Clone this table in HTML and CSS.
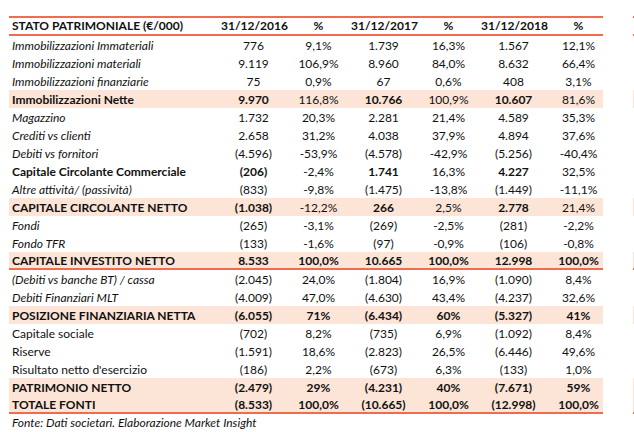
FILE: index.html
```html
<!DOCTYPE html>
<html lang="it">
<head>
<meta charset="utf-8">
<title>Stato Patrimoniale</title>
<link rel="stylesheet" href="styles.css">
</head>
<body>
<div class="page">
  <div class="sheet">
    <div class="row head">
      <div class="lbl">STATO PATRIMONIALE (€/000)</div>
      <div>31/12/2016</div><div>%</div><div>31/12/2017</div><div>%</div><div>31/12/2018</div><div class="last">%</div>
    </div>
    <div class="row it">
      <div class="lbl">Immobilizzazioni Immateriali</div>
      <div>776</div><div>9,1%</div><div>1.739</div><div>16,3%</div><div>1.567</div><div class="last">12,1%</div>
    </div>
    <div class="row it">
      <div class="lbl">Immobilizzazioni materiali</div>
      <div>9.119</div><div>106,9%</div><div>8.960</div><div>84,0%</div><div>8.632</div><div class="last">66,4%</div>
    </div>
    <div class="row it">
      <div class="lbl">Immobilizzazioni finanziarie</div>
      <div>75</div><div>0,9%</div><div>67</div><div>0,6%</div><div>408</div><div class="last">3,1%</div>
    </div>
    <div class="row tot">
      <div class="lbl b">Immobilizzazioni Nette</div>
      <div class="b">9.970</div><div>116,8%</div><div class="b">10.766</div><div>100,9%</div><div class="b">10.607</div><div class="last">81,6%</div>
    </div>
    <div class="row it">
      <div class="lbl">Magazzino</div>
      <div>1.732</div><div>20,3%</div><div>2.281</div><div>21,4%</div><div>4.589</div><div class="last">35,3%</div>
    </div>
    <div class="row it">
      <div class="lbl">Crediti vs clienti</div>
      <div>2.658</div><div>31,2%</div><div>4.038</div><div>37,9%</div><div>4.894</div><div class="last">37,6%</div>
    </div>
    <div class="row it">
      <div class="lbl">Debiti vs fornitori</div>
      <div>(4.596)</div><div>-53,9%</div><div>(4.578)</div><div>-42,9%</div><div>(5.256)</div><div class="last">-40,4%</div>
    </div>
    <div class="row">
      <div class="lbl b">Capitale Circolante Commerciale</div>
      <div class="b">(206)</div><div>-2,4%</div><div class="b">1.741</div><div>16,3%</div><div class="b">4.227</div><div class="last">32,5%</div>
    </div>
    <div class="row it">
      <div class="lbl">Altre attività/ (passività)</div>
      <div>(833)</div><div>-9,8%</div><div>(1.475)</div><div>-13,8%</div><div>(1.449)</div><div class="last">-11,1%</div>
    </div>
    <div class="row tot">
      <div class="lbl b">CAPITALE CIRCOLANTE NETTO</div>
      <div class="b">(1.038)</div><div>-12,2%</div><div class="b">266</div><div>2,5%</div><div class="b">2.778</div><div class="last">21,4%</div>
    </div>
    <div class="row it">
      <div class="lbl">Fondi</div>
      <div>(265)</div><div>-3,1%</div><div>(269)</div><div>-2,5%</div><div>(281)</div><div class="last">-2,2%</div>
    </div>
    <div class="row it">
      <div class="lbl">Fondo TFR</div>
      <div>(133)</div><div>-1,6%</div><div>(97)</div><div>-0,9%</div><div>(106)</div><div class="last">-0,8%</div>
    </div>
    <div class="row tot sep">
      <div class="lbl b">CAPITALE INVESTITO NETTO</div>
      <div class="b">8.533</div><div class="b">100,0%</div><div class="b">10.665</div><div class="b">100,0%</div><div class="b">12.998</div><div class="last b">100,0%</div>
    </div>
    <div class="row it">
      <div class="lbl">(Debiti vs banche BT) / cassa</div>
      <div>(2.045)</div><div>24,0%</div><div>(1.804)</div><div>16,9%</div><div>(1.090)</div><div class="last">8,4%</div>
    </div>
    <div class="row it">
      <div class="lbl">Debiti Finanziari MLT</div>
      <div>(4.009)</div><div>47,0%</div><div>(4.630)</div><div>43,4%</div><div>(4.237)</div><div class="last">32,6%</div>
    </div>
    <div class="row tot">
      <div class="lbl b">POSIZIONE FINANZIARIA NETTA</div>
      <div class="b">(6.055)</div><div class="b">71%</div><div class="b">(6.434)</div><div class="b">60%</div><div class="b">(5.327)</div><div class="last b">41%</div>
    </div>
    <div class="row">
      <div class="lbl">Capitale sociale</div>
      <div>(702)</div><div>8,2%</div><div>(735)</div><div>6,9%</div><div>(1.092)</div><div class="last">8,4%</div>
    </div>
    <div class="row">
      <div class="lbl">Riserve</div>
      <div>(1.591)</div><div>18,6%</div><div>(2.823)</div><div>26,5%</div><div>(6.446)</div><div class="last">49,6%</div>
    </div>
    <div class="row">
      <div class="lbl">Risultato netto d'esercizio</div>
      <div>(186)</div><div>2,2%</div><div>(673)</div><div>6,3%</div><div>(133)</div><div class="last">1,0%</div>
    </div>
    <div class="row tot">
      <div class="lbl b">PATRIMONIO NETTO</div>
      <div class="b">(2.479)</div><div class="b">29%</div><div class="b">(4.231)</div><div class="b">40%</div><div class="b">(7.671)</div><div class="last b">59%</div>
    </div>
    <div class="row tot end">
      <div class="lbl b">TOTALE FONTI</div>
      <div class="b">(8.533)</div><div class="b">100,0%</div><div class="b">(10.665)</div><div class="b">100,0%</div><div class="b">(12.998)</div><div class="last b">100,0%</div>
    </div>
    <div class="note">Fonte: Dati societari. Elaborazione Market Insight</div>
  </div>

  <div class="ghost" aria-hidden="true">
    <div class="g head"></div>
    <div class="g"></div><div class="g"></div><div class="g"></div>
    <div class="g tot"></div>
    <div class="g"></div><div class="g"></div><div class="g"></div><div class="g"></div><div class="g"></div>
    <div class="g tot"></div>
    <div class="g"></div><div class="g"></div>
    <div class="g tot sep"></div>
    <div class="g"></div><div class="g"></div>
    <div class="g tot"></div>
    <div class="g"></div><div class="g"></div><div class="g"></div>
    <div class="g tot"></div>
    <div class="g tot end"></div>
  </div>
</div>
</body>
</html>
```

FILE: styles.css
```css
html, body {
  margin: 0;
  padding: 0;
  background: #ffffff;
  overflow: hidden;
}

.page {
  display: flex;
  gap: 30px;
  padding: 16px 0 0 9px;
  width: 625px;
  overflow: hidden;
  font-family: Lato, "Open Sans", sans-serif;
  font-size: 12px;
  color: #111111;
}

.sheet {
  width: 594px;
  flex: none;
}

.row {
  display: grid;
  grid-template-columns: 212px 65px 65px 65px 65px 65px 57px;
  height: 18px;
  line-height: 19px;
  box-sizing: border-box;
  white-space: nowrap;
}

.row > div {
  text-align: center;
}

.row > .last {
  padding-left: 8px;
}

.row > .lbl {
  text-align: left;
  padding-left: 3px;
}

.head {
  height: 20px;
  line-height: 16px;
  border-top: 2px solid #f26a4f;
  border-bottom: 2px solid #f26a4f;
  font-weight: 700;
}

.it .lbl {
  font-style: italic;
}

.b {
  font-weight: 700;
}

.tot {
  background: #fce4d6;
}

.sep, .end {
  border-bottom: 2px solid #f26a4f;
  line-height: 18px;
}

.note {
  padding-left: 3px;
  height: 16px;
  line-height: 18px;
  font-style: italic;
}

.ghost {
  width: 1px;
  flex: none;
}

.g {
  height: 18px;
  box-sizing: border-box;
}

.g.head {
  height: 20px;
}
```
